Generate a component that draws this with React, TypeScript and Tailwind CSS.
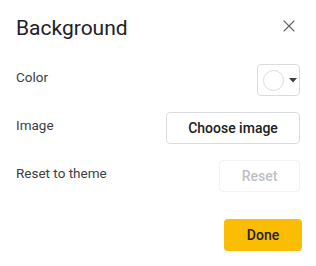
import { X } from 'lucide-react';

export default function App() {
  return (
    <div
      className="w-[316px] h-[266px] bg-white px-4 pt-[12px] text-[#3c4043]"
      style={{ fontFamily: 'Roboto, "Liberation Sans", sans-serif' }}
    >
      <div className="flex items-center justify-between h-[28px]">
        <h1 className="text-[21px] leading-[28px] mt-[3px] text-[#202124]">Background</h1>
        <button className="w-6 h-6 flex items-center justify-center mr-[-1px] text-[#5f6368]">
          <X size={20} strokeWidth={1.3} />
        </button>
      </div>

      <div className="mt-[24px] flex flex-col gap-4">
        <div className="flex items-center justify-between h-8">
          <span className="text-[13.5px] leading-5 mb-[6px]">Color</span>
          <button className="w-[43px] h-8 rounded-[4px] border border-[#dadce0] flex items-center pl-[5px]">
            <span className="w-[21px] h-[21px] rounded-full border border-[#dadce0]" />
            <svg width="8" height="5" viewBox="0 0 8 5" className="ml-[5px]">
              <path d="M0 0 L8 0 L4 4.5 Z" fill="#3c4043" />
            </svg>
          </button>
        </div>

        <div className="flex items-center justify-between h-8">
          <span className="text-[13.5px] leading-5 mb-[6px]">Image</span>
          <button className="w-[134px] h-8 rounded-[4px] border border-[#dadce0] text-[14px] font-medium text-[#202124]">
            Choose image
          </button>
        </div>

        <div className="flex items-center justify-between h-8">
          <span className="text-[13.5px] leading-5 mb-[6px]">Reset to theme</span>
          <button className="w-[81px] h-8 rounded-[4px] border border-[#f1f3f4] text-[14px] font-medium text-[#bdc1c6]">
            Reset
          </button>
        </div>
      </div>

      <div className="mt-[27px] flex justify-end">
        <button className="w-[78px] h-8 mr-[-2px] rounded-[4px] bg-[#fbbc04] text-[14px] font-medium text-[#202124]">
          Done
        </button>
      </div>
    </div>
  );
}
